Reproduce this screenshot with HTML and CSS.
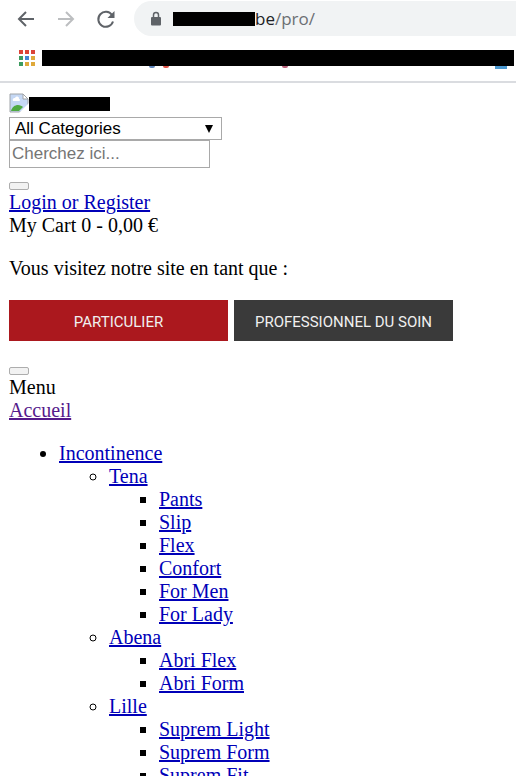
FILE: index.html
```
<!DOCTYPE html>
<html lang="fr">
<head>
  <meta charset="UTF-8" />
  <meta name="viewport" content="width=device-width, initial-scale=1.0" />
  <title>Pro</title>
  <link rel="stylesheet" href="styles.css">
</head>
<body>
  <header class="browser">
    <div class="toolbar">
      <svg class="nav-icon" width="20" height="20" viewBox="0 0 20 20"><path d="M18 10H3M10 3L3 10l7 7" /></svg>
      <svg class="nav-icon disabled" width="20" height="20" viewBox="0 0 20 20"><path d="M2 10h15M10 3l7 7-7 7" /></svg>
      <svg class="nav-icon" width="20" height="20" viewBox="0 0 20 20"><path d="M16 6A7.500 7.500 0 1 0 17 12.500" /><path class="solid" d="M18.500 2v7h-7z" /></svg>
      <div class="address">
        <svg width="12" height="16" viewBox="0 0 12 16"><rect x="1" y="6" width="10" height="8.500" rx="1" fill="#5f6368" /><path d="M3.500 6V4a2.500 2.500 0 0 1 5 0v2" fill="none" stroke="#5f6368" stroke-width="1.500" /></svg>
        <span class="url"><span class="mask"></span><span class="domain">be</span>/pro/</span>
      </div>
    </div>
    <div class="bookmarks">
      <svg width="18" height="18" viewBox="0 0 18 18">
        <path fill="#db4437" d="M1 1h4v4H1zM7 1h4v4H7zM13 1h4v4h-4z" />
        <path fill="#3c9b5f" d="M1 7h4v4H1zM1 13h4v4H1z" />
        <path fill="#4285d4" d="M7 7h4v4H7z" />
        <path fill="#dfa93a" d="M13 7h4v4h-4zM7 13h4v4H7zM13 13h4v4h-4z" />
      </svg>
      <div class="bookmark-mask">
        <span class="mark blue"></span>
        <span class="mark red"></span>
        <span class="mark pink"></span>
        <span class="mark sky"></span>
      </div>
    </div>
  </header>

  <main>
    <div class="logo">
      <svg width="20" height="20" viewBox="0 0 20 20">
        <path d="M1 1h13l5 5v13H1z" fill="#c5d8f5" stroke="#a0a4a8" />
        <path d="M14 1v5h5z" fill="#fff" stroke="#a0a4a8" />
        <path d="M4 8a2 2 0 0 1 2-3 2 2 0 0 1 4 1 1 1 0 0 1 0 2z" fill="#fff" />
        <path d="M2 18c1-4 4-6 7-6 2 0 4 1 5 2l-4 4z" fill="#4faa42" />
        <path d="M10 20L20 10v10z" fill="#fff" />
      </svg>
      <span class="logo-mask"></span>
    </div>
    <form class="search">
      <select aria-label="Categories"><option>All Categories</option></select>
      <input type="text" placeholder="Cherchez ici..." aria-label="Cherchez ici" />
      <button type="button" class="small-button" aria-label="Rechercher"></button>
    </form>
    <div><a href="#">Login or Register</a></div>
    <div>My Cart 0 - 0,00 €</div>
    <p>Vous visitez notre site en tant que :</p>
    <div class="profiles">
      <button type="button" class="profile particulier">PARTICULIER</button>
      <button type="button" class="profile">PROFESSIONNEL DU SOIN</button>
    </div>
    <nav>
      <button type="button" class="small-button" aria-label="Menu"></button>
      <div>Menu</div>
      <a href="#" class="visited">Accueil</a>
      <ul>
        <li><a href="#">Incontinence</a>
          <ul>
            <li><a href="#">Tena</a>
              <ul>
                <li><a href="#">Pants</a></li>
                <li><a href="#">Slip</a></li>
                <li><a href="#">Flex</a></li>
                <li><a href="#">Confort</a></li>
                <li><a href="#">For Men</a></li>
                <li><a href="#">For Lady</a></li>
              </ul>
            </li>
            <li><a href="#">Abena</a>
              <ul>
                <li><a href="#">Abri Flex</a></li>
                <li><a href="#">Abri Form</a></li>
              </ul>
            </li>
            <li><a href="#">Lille</a>
              <ul>
                <li><a href="#">Suprem Light</a></li>
                <li><a href="#">Suprem Form</a></li>
                <li><a href="#">Suprem Fit</a></li>
              </ul>
            </li>
          </ul>
        </li>
      </ul>
    </nav>
  </main>
</body>
</html>
```
FILE: styles.css
```
html {
  scrollbar-width: none;
}
body {
  margin: 0;
  background: #fff;
  color: #000;
  font-family: "Liberation Serif", "Times New Roman", serif;
  font-size: 20px;
  line-height: 23px;
}
.browser {
  border-bottom: 2px solid #dadce0;
  font-family: "Open Sans", sans-serif;
}
.toolbar {
  display: flex;
  align-items: center;
  gap: 20px;
  padding: 1px 0 0 16px;
}
.nav-icon {
  flex: none;
  fill: none;
  stroke: #5f6368;
  stroke-width: 2;
}
.nav-icon .solid {
  fill: #5f6368;
  stroke: none;
}
.disabled {
  stroke: #bcbec0;
}
.address {
  flex: 1;
  display: flex;
  align-items: center;
  gap: 11px;
  height: 35px;
  margin-left: -2px;
  padding-left: 16px;
  background: #f1f3f4;
  border-radius: 18px 0 0 18px;
}
.url {
  display: flex;
  align-items: center;
  color: #6b6f73;
  font-size: 17px;
}
.domain {
  color: #202124;
}
.mask {
  width: 82px;
  height: 14px;
  background: #000;
}
.bookmarks {
  display: flex;
  align-items: center;
  gap: 6px;
  height: 44px;
  padding: 0 2px 1px 18px;
}
.bookmark-mask {
  flex: 1;
  position: relative;
  height: 16px;
  background: #000;
}
.mark {
  position: absolute;
  top: 16px;
  width: 6px;
  height: 2px;
  border-radius: 0 0 3px 3px;
}
.blue {
  left: 107px;
  background: #5f86bd;
}
.red {
  left: 121px;
  background: #df5246;
}
.pink {
  left: 240px;
  background: #b9607a;
}
.sky {
  right: 7px;
  width: 12px;
  height: 3px;
  border-radius: 0;
  background: #4a98d0;
}
main {
  padding: 10px 9px 0;
}
.logo {
  display: flex;
  align-items: center;
  height: 24px;
}
.logo svg {
  align-self: flex-start;
}
.logo-mask {
  width: 81px;
  height: 14px;
  margin-bottom: 2px;
  background: #000;
}
.search {
  display: flex;
  flex-direction: column;
  align-items: flex-start;
}
select, input {
  box-sizing: border-box;
  margin: 0;
  border: 1px solid #a9a9a9;
  border-radius: 0;
  font-family: "Liberation Sans", Arial, sans-serif;
  font-size: 17px;
}
select {
  width: 213px;
  height: 23px;
  padding: 0 5px;
  appearance: none;
  color: #000;
  background: #fff url("data:image/svg+xml,%3Csvg xmlns='http://www.w3.org/2000/svg' width='8' height='8'%3E%3Cpath d='M0 0h8L4 8z'/%3E%3C/svg%3E") no-repeat right 8px center;
}
input {
  width: 201px;
  height: 28px;
  padding: 0 2px;
}
input::placeholder {
  color: #757575;
}
.small-button {
  display: block;
  box-sizing: border-box;
  width: 20px;
  height: 8px;
  padding: 0;
  border: 1px solid #adadad;
  border-radius: 2px;
  background: #f2f2f2;
}
.search .small-button {
  margin: 14px 0 1px;
}
a {
  color: #0000b8;
}
.visited {
  color: #551a8b;
}
p {
  margin: 20px 0;
}
.profiles {
  display: flex;
  gap: 6px;
}
.profile {
  width: 219px;
  height: 41px;
  padding: 3px 0 0;
  border: 0;
  background: #3a3a3a;
  color: #f0f0f0;
  font-family: Roboto, sans-serif;
  font-size: 15px;
}
.particulier {
  background: #ab181e;
}
nav {
  padding-top: 26px;
}
nav .small-button {
  margin-bottom: 1px;
}
ul {
  margin: 20px 0;
  padding-left: 50px;
}
ul ul {
  margin: 0;
}
```
